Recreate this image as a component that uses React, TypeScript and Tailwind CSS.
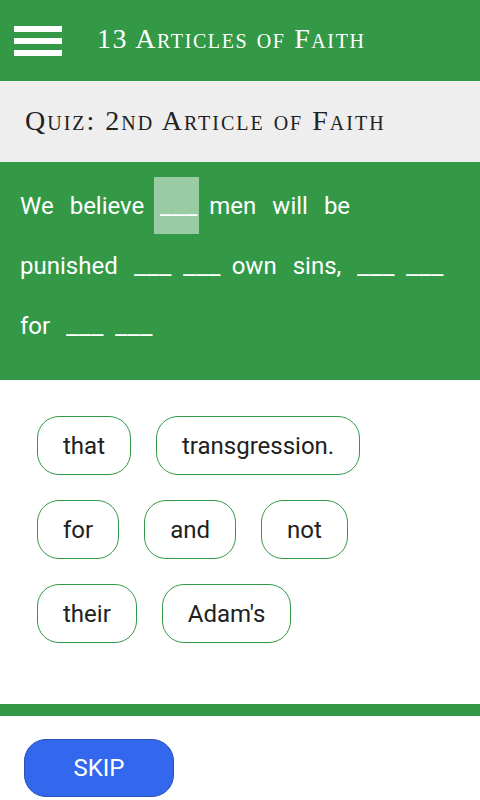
import React from "react";

const sentence: { text: string; blank?: boolean; active?: boolean }[] = [
  { text: "We" },
  { text: "believe" },
  { text: "___", blank: true, active: true },
  { text: "men" },
  { text: "will" },
  { text: "be" },
  { text: "punished" },
  { text: "___", blank: true },
  { text: "___", blank: true },
  { text: "own" },
  { text: "sins," },
  { text: "___", blank: true },
  { text: "___", blank: true },
  { text: "for" },
  { text: "___", blank: true },
  { text: "___", blank: true },
];

const choices = ["that", "transgression.", "for", "and", "not", "their", "Adam's"];

const serif = { fontFamily: '"Liberation Serif", "DejaVu Serif", serif' };

export default function App() {
  return (
    <div
      className="flex h-[800px] w-[480px] flex-col bg-white"
      style={{ fontFamily: "Roboto, Arial, sans-serif" }}
    >
      <header className="flex h-[81px] shrink-0 items-center bg-[#339947] pl-[14px]">
        <div className="flex w-[48px] flex-col gap-[6px]">
          <span className="h-[6px] bg-white" />
          <span className="h-[6px] bg-white" />
          <span className="h-[6px] bg-white" />
        </div>
        <h1
          className="mb-[4px] ml-[35px] text-[28px] leading-none tracking-[1.6px] text-white [font-variant:small-caps]"
          style={serif}
        >
          13 Articles of Faith
        </h1>
      </header>

      <div className="flex h-[81px] shrink-0 items-center bg-[#eeeeee] pl-[25px]">
        <h2
          className="mb-[2px] text-[28px] leading-none tracking-[2px] text-[#222] [font-variant:small-caps]"
          style={serif}
        >
          Quiz: 2nd Article of Faith
        </h2>
      </div>

      <div className="flex shrink-0 flex-wrap gap-x-[4px] gap-y-[3px] bg-[#339947] px-[14px] pt-[15px] pb-[26px]">
        {sentence.map((w, i) => (
          <span
            key={i}
            className={
              "flex h-[57px] items-center px-[6px] text-[24px] text-white " +
              (w.active ? "bg-white/50" : "")
            }
          >
            {w.blank ? (
              <span className="inline-block w-[33px]">
                <span className="inline-block origin-left scale-x-[1.15]">{w.text}</span>
              </span>
            ) : (
              w.text
            )}
          </span>
        ))}
      </div>

      <div className="flex flex-1 flex-wrap content-start gap-[25px] pt-[36px] pl-[37px] pr-[60px]">
        {choices.map((c) => (
          <button
            key={c}
            className="flex h-[59px] items-center rounded-[22px] border border-[#339947] px-[25px] text-[24px] text-[#212121]"
          >
            {c}
          </button>
        ))}
      </div>

      <div className="h-[12px] shrink-0 bg-[#339947]" />

      <div className="flex h-[84px] shrink-0 items-start pl-[24px] pt-[23px]">
        <button className="h-[58px] w-[150px] rounded-[22px] border border-[#2a4fb5] bg-[#3367ee] text-[24px] text-white">
          SKIP
        </button>
      </div>
    </div>
  );
}
